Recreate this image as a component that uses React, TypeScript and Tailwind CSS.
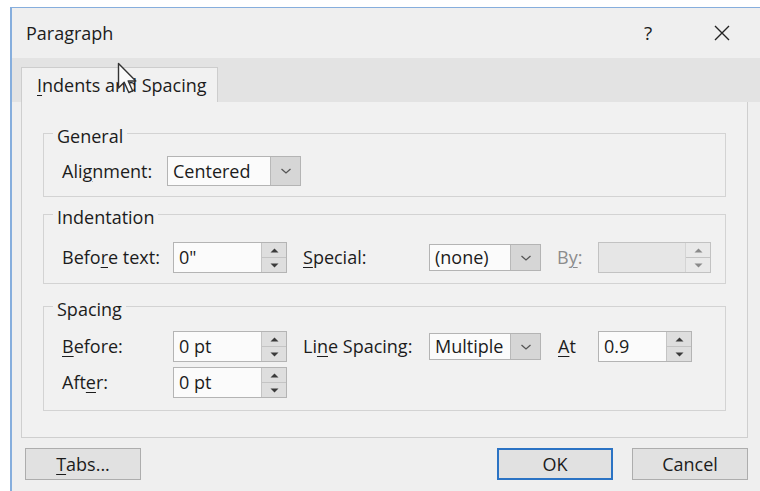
import React from 'react';
import clsx from 'clsx';

// Small helper: underlines the access-key letter inside a label
const Key = ({ children }: { children: React.ReactNode }) => (
    <u className="underline-offset-[3px] decoration-1">{children}</u>
);

const Chevron = () => (
    <svg width="12" height="8" viewBox="0 0 12 8" className="text-[#555]">
        <path d="M1.5 2 L6 6 L10.5 2" fill="none" stroke="currentColor" strokeWidth="1.3" />
    </svg>
);

const Label = ({ children, className }: { children: React.ReactNode; className: string }) => (
    <span className={clsx('shrink-0 whitespace-nowrap', className)}>{children}</span>
);

const Combo = ({ value, className }: { value: string; className: string }) => (
    <div className={clsx('flex shrink-0 border border-[#b4b4b4] bg-[#fbfbfb]', className)}>
        <div className="flex flex-1 items-center pl-[5px]">{value}</div>
        <div className="flex w-[30px] items-center justify-center border-l border-[#b9b9b9] bg-[#d6d6d6]">
            <Chevron />
        </div>
    </div>
);

const Arrows = ({ dim }: { dim?: boolean }) => (
    <div className={clsx('flex w-[25px] flex-col border-l', dim ? 'border-[#d4d4d4] bg-[#e9e9e9]' : 'border-[#c4c4c4] bg-[#dedede]')}>
        <div className="flex flex-1 items-center justify-center border-b border-[#c4c4c4]">
            <svg width="9" height="5" viewBox="0 0 9 5">
                <path d="M0.5 4.5 L4.5 0.5 L8.5 4.5 Z" fill={dim ? '#8a8a8a' : '#3a3a3a'} />
            </svg>
        </div>
        <div className="flex flex-1 items-center justify-center">
            <svg width="9" height="5" viewBox="0 0 9 5">
                <path d="M0.5 0.5 L4.5 4.5 L8.5 0.5 Z" fill={dim ? '#8a8a8a' : '#3a3a3a'} />
            </svg>
        </div>
    </div>
);

const Spin = ({ value, className, disabled }: { value?: string; className: string; disabled?: boolean }) => (
    <div
        className={clsx(
            'flex h-[31px] shrink-0 border',
            disabled ? 'border-[#c2c2c2] bg-[#e6e6e6]' : 'border-[#b4b4b4] bg-[#fbfbfb]',
            className
        )}
    >
        <div className="flex flex-1 items-center pl-[5px]">{value}</div>
        <Arrows dim={disabled} />
    </div>
);

const Group = ({ title, className, children }: { title: string; className?: string; children: React.ReactNode }) => (
    <fieldset className={clsx('min-w-0 border border-[#d3d3d3] pl-[18px] pr-[8px]', className)}>
        <legend className="-ml-[9px] px-[4px] pt-[6px] leading-[20px]">{title}</legend>
        {children}
    </fieldset>
);

const Button = ({ children, primary, className }: { children: React.ReactNode; primary?: boolean; className?: string }) => (
    <button
        className={clsx(
            'flex h-[32px] w-[116px] items-center justify-center bg-[#e1e1e1]',
            primary ? 'border-2 border-[#2b73c4]' : 'border border-[#adadad]',
            className
        )}
    >
        {children}
    </button>
);

export default function App() {
    return (
        <div className="h-[491px] w-[760px] overflow-hidden bg-white pl-[10px] pt-[7px] font-['Open_Sans',sans-serif] text-[18px] text-[#1c1c1c]">
            <div className="relative flex h-[484px] w-[752px] flex-col border-l-2 border-t border-[#86aedd] bg-[#efefef]">
                {/* title bar */}
                <div className="flex h-[50px] items-center pl-[14px]">
                    <span className="flex-1">Paragraph</span>
                    <span className="w-[20px] text-center text-[19px]">?</span>
                    <svg width="16" height="16" viewBox="0 0 16 16" className="ml-[56px] mr-[32px]">
                        <path d="M1 1 L15 15 M15 1 L1 15" stroke="#222" strokeWidth="1.4" />
                    </svg>
                </div>

                {/* tab strip */}
                <div className="flex h-[44px] items-end bg-[#e3e3e3] pl-[9px]">
                    <div className="flex h-[35px] w-[197px] items-center border border-b-0 border-[#cdcdcd] bg-[#f1f1f1] pl-[15px]">
                        <span>
                            <Key>I</Key>ndents and Spacing
                        </span>
                    </div>
                </div>

                {/* tab page */}
                <div className="ml-[9px] flex h-[336px] w-[727px] flex-col border border-t-0 border-[#cfcfcf] bg-[#f1f1f1] px-[21px] pt-[18px]">
                    <Group title="General" className="pb-[10px]">
                        <div className="mt-[10px] flex h-[30px] items-center">
                            <Label className="w-[105px]">
                                Ali<Key>g</Key>nment:
                            </Label>
                            <Combo value="Centered" className="h-[30px] w-[134px]" />
                        </div>
                    </Group>

                    <Group title="Indentation" className="mt-[4px] pb-[10px]">
                        <div className="mt-[15px] flex items-center">
                            <Label className="w-[111px]">
                                Befo<Key>r</Key>e text:
                            </Label>
                            <Spin value={'0"'} className="w-[114px]" />
                            <Label className="ml-[16px] w-[126px]">
                                <Key>S</Key>pecial:
                            </Label>
                            <Combo value="(none)" className="h-[27px] w-[112px]" />
                            <Label className="ml-[16px] w-[41px] text-[#8c8c8c]">
                                B<Key>y</Key>:
                            </Label>
                            <Spin className="w-[113px]" disabled />
                        </div>
                    </Group>

                    <Group title="Spacing" className="mt-[9px] pb-[12px]">
                        <div className="mt-[12px] flex items-center">
                            <Label className="w-[111px]">
                                <Key>B</Key>efore:
                            </Label>
                            <Spin value="0 pt" className="w-[114px]" />
                            <Label className="ml-[16px] w-[126px]">
                                Li<Key>n</Key>e Spacing:
                            </Label>
                            <Combo value="Multiple" className="h-[27px] w-[112px]" />
                            <Label className="ml-[17px] w-[40px]">
                                <Key>A</Key>t
                            </Label>
                            <Spin value="0.9" className="w-[94px]" />
                        </div>
                        <div className="mt-[5px] flex items-center">
                            <Label className="w-[111px]">
                                Aft<Key>e</Key>r:
                            </Label>
                            <Spin value="0 pt" className="w-[114px]" />
                        </div>
                    </Group>
                </div>

                {/* dialog buttons */}
                <div className="ml-[13px] mt-[10px] flex">
                    <Button>
                        <span>
                            <Key>T</Key>abs...
                        </span>
                    </Button>
                    <Button primary className="ml-[356px]">
                        OK
                    </Button>
                    <Button className="ml-[19px]">Cancel</Button>
                </div>

                {/* mouse pointer resting on the tab */}
                <svg width="22" height="34" viewBox="0 0 22 34" className="absolute left-[105px] top-[54px]">
                    <path
                        d="M1.5 1.5 L1.5 26 L7.2 20.2 L11.8 30.5 L15.6 28.8 L11.2 19 L18.8 19 Z"
                        fill="#fafafa"
                        stroke="#333"
                        strokeWidth="1.4"
                        strokeLinejoin="round"
                    />
                </svg>
            </div>
        </div>
    );
}
